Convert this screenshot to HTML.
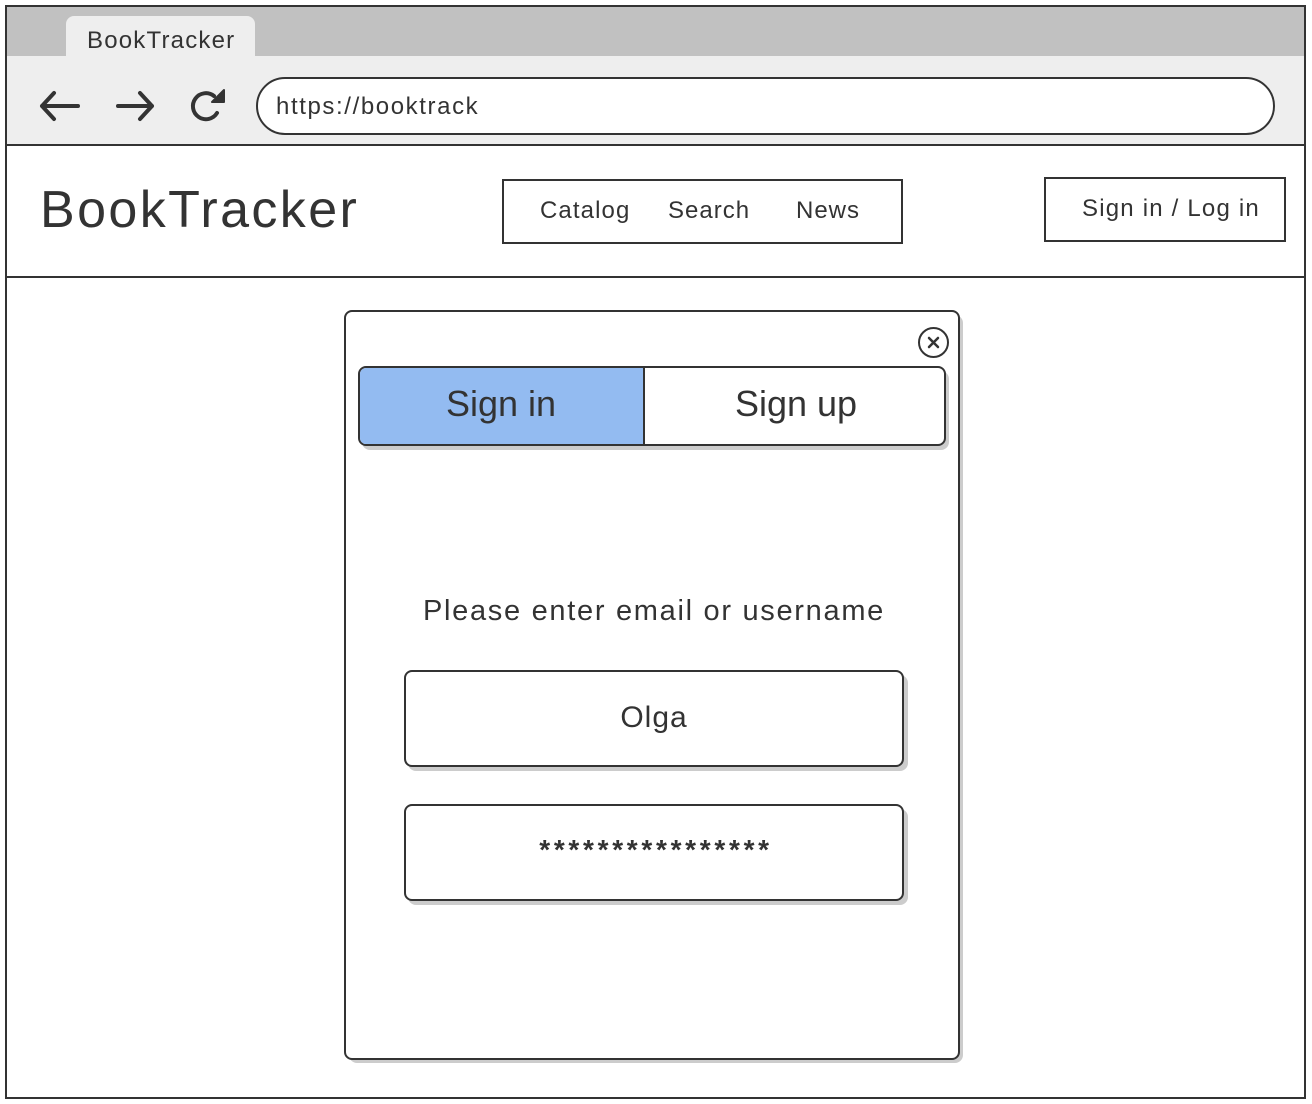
<!DOCTYPE html>
<html><head><meta charset="utf-8"><style>
*{box-sizing:border-box;margin:0;padding:0}
body{width:1312px;height:1104px;background:#fff;position:relative;font-family:"Liberation Sans",sans-serif;color:#333;overflow:hidden}
.a{position:absolute}
.b{border:2px solid #333}
.t{position:absolute;white-space:nowrap}
</style></head><body>
<div class="a" style="left:6px;top:6px;width:1298px;height:52px;background:#c1c1c1"></div>
<div class="a" style="left:66px;top:16px;width:189px;height:44px;background:#eee;border-radius:8px 8px 0 0"></div>
<div class="t" style="left:87px;top:27px;font-size:24px;letter-spacing:1.2px">BookTracker</div>
<div class="a" style="left:6px;top:56px;width:1298px;height:90px;background:#eee"></div>
<div class="a b" style="left:5px;top:5px;width:1301px;height:1094px"></div>
<div class="a" style="left:5px;top:144px;width:1301px;height:2px;background:#333"></div>
<div class="a" style="left:5px;top:276px;width:1301px;height:2px;background:#333"></div>
<svg class="a" style="left:36px;top:85px" width="200" height="42" viewBox="0 0 200 42" fill="none" stroke="#333" stroke-width="4" stroke-linecap="round" stroke-linejoin="round">
<path d="M6 21H42M18 8L6 21L18 34"/>
<path d="M82 21H116M104 8L116 21L104 34"/>
<path d="M178 11A13 13 0 1 0 181 28"/>
<path d="M176 17L188 17L188 5Z" fill="#333" stroke-width="2"/>
</svg>
<div class="a b" style="left:256px;top:77px;width:1019px;height:58px;border-radius:29px;background:#fff"></div>
<div class="t" style="left:276px;top:93px;font-size:24px;letter-spacing:1.6px">https://booktrack</div>
<div class="t" style="left:40px;top:180px;font-size:52px;letter-spacing:2.4px">BookTracker</div>
<div class="a b" style="left:502px;top:179px;width:401px;height:65px"></div>
<div class="t" style="left:540px;top:197px;font-size:24px;letter-spacing:1.1px">Catalog</div>
<div class="t" style="left:668px;top:197px;font-size:24px;letter-spacing:1px">Search</div>
<div class="t" style="left:796px;top:197px;font-size:24px;letter-spacing:1px">News</div>
<div class="a b" style="left:1044px;top:177px;width:242px;height:65px"></div>
<div class="t" style="left:1082px;top:195px;font-size:24px;letter-spacing:1.2px">Sign in / Log in</div>
<div class="a" style="left:349px;top:315px;width:614px;height:748px;border-radius:8px;background:#ccc"></div>
<div class="a b" style="left:344px;top:310px;width:616px;height:750px;border-radius:8px;background:#fff"></div>
<div class="a b" style="left:918px;top:327px;width:31px;height:31px;border-radius:50%"></div>
<svg class="a" style="left:918px;top:327px" width="31" height="31" stroke="#333" stroke-width="2.5" stroke-linecap="round"><path d="M11 11L20 20M20 11L11 20"/></svg>
<div class="a" style="left:362px;top:371px;width:587px;height:79px;border-radius:8px;background:#ccc"></div>
<div class="a b" style="left:358px;top:366px;width:588px;height:80px;border-radius:8px;background:#fff;overflow:hidden">
<div class="a" style="left:0;top:0;width:285px;height:76px;background:#93bbf1;border-right:2px solid #333"></div>
</div>
<div class="t" style="left:358px;top:383px;width:286px;text-align:center;font-size:36px">Sign in</div>
<div class="t" style="left:645px;top:383px;width:302px;text-align:center;font-size:36px">Sign up</div>
<div class="t" style="left:344px;top:595px;width:620px;text-align:center;font-size:29px;letter-spacing:1.7px">Please enter email or username</div>
<div class="a" style="left:408px;top:675px;width:500px;height:96px;border-radius:8px;background:#ccc"></div>
<div class="a b" style="left:404px;top:670px;width:500px;height:97px;border-radius:8px;background:#fff"></div>
<div class="t" style="left:404px;top:701px;width:500px;text-align:center;font-size:30px;letter-spacing:1px">Olga</div>
<div class="a" style="left:408px;top:809px;width:500px;height:96px;border-radius:8px;background:#ccc"></div>
<div class="a b" style="left:404px;top:804px;width:500px;height:97px;border-radius:8px;background:#fff"></div>
<div class="t" style="left:404px;top:834px;width:500px;text-align:center;font-size:28px;font-weight:bold;letter-spacing:3.7px;padding-left:4px">****************</div>
</body></html>
